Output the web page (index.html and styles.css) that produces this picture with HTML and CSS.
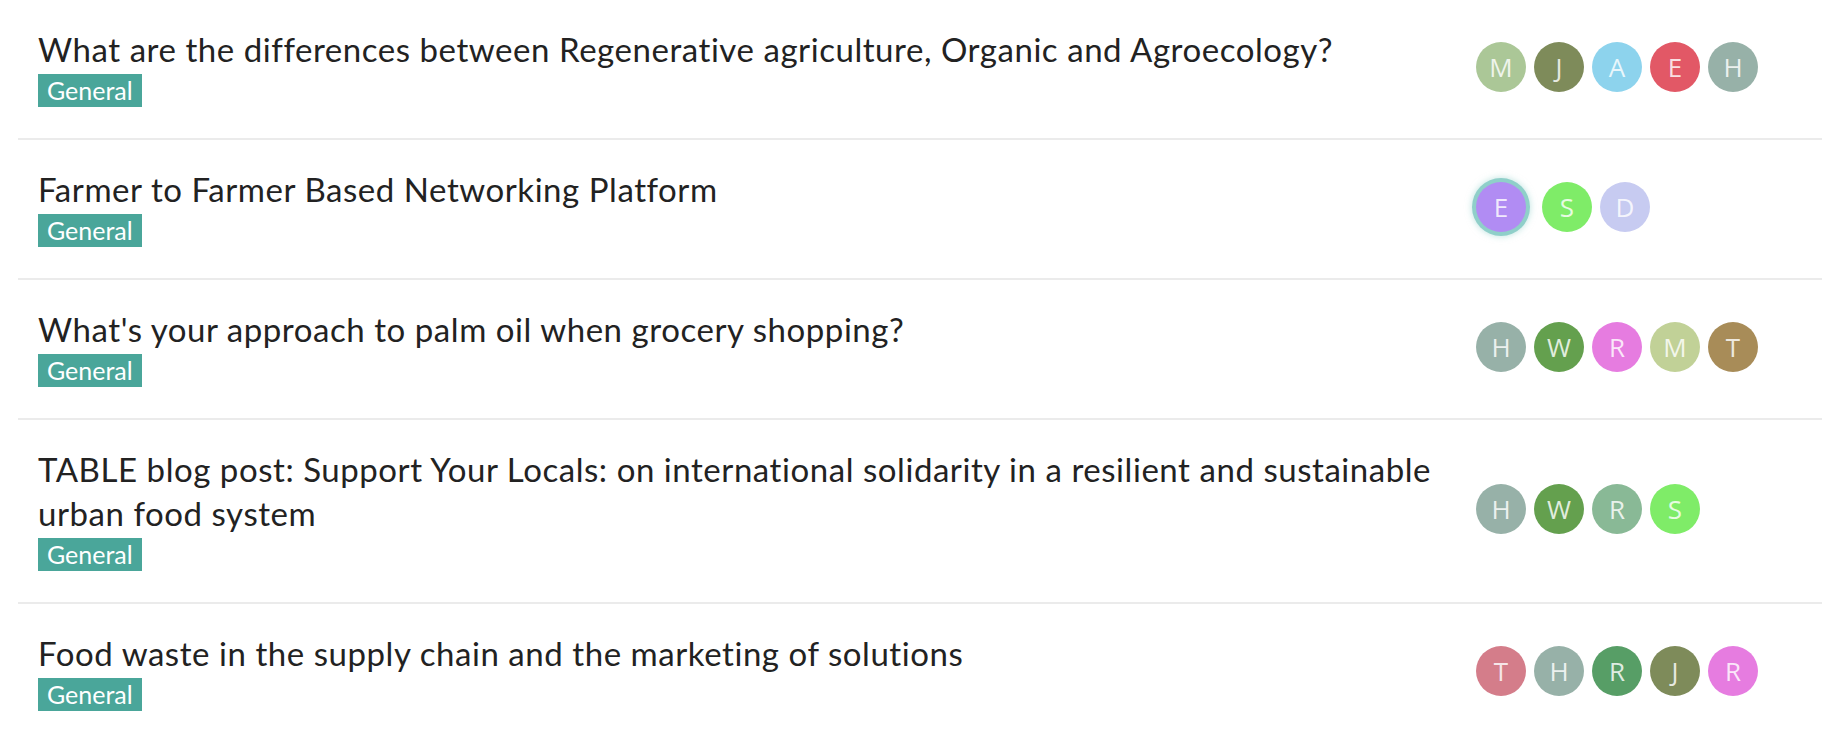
FILE: index.html
```html
<!DOCTYPE html>
<html lang="en">
<head>
<meta charset="utf-8">
<title>Topics</title>
<link rel="stylesheet" href="styles.css">
</head>
<body>
<ul class="topic-list">
  <li class="topic">
    <div class="topic-main">
      <div class="topic-title">What are the differences between Regenerative agriculture, Organic and Agroecology?</div>
      <span class="tag">General</span>
    </div>
    <div class="posters">
      <span class="avatar c-sage">M</span>
      <span class="avatar c-olive">J</span>
      <span class="avatar c-sky">A</span>
      <span class="avatar c-red">E</span>
      <span class="avatar c-grey">H</span>
    </div>
  </li>
  <li class="topic">
    <div class="topic-main">
      <div class="topic-title">Farmer to Farmer Based Networking Platform</div>
      <span class="tag">General</span>
    </div>
    <div class="posters">
      <span class="avatar c-purple latest">E</span>
      <span class="avatar c-lime">S</span>
      <span class="avatar c-lavender">D</span>
    </div>
  </li>
  <li class="topic">
    <div class="topic-main">
      <div class="topic-title">What's your approach to palm oil when grocery shopping?</div>
      <span class="tag">General</span>
    </div>
    <div class="posters">
      <span class="avatar c-grey">H</span>
      <span class="avatar c-green">W</span>
      <span class="avatar c-pink">R</span>
      <span class="avatar c-pale">M</span>
      <span class="avatar c-brown">T</span>
    </div>
  </li>
  <li class="topic">
    <div class="topic-main">
      <div class="topic-title">TABLE blog post: Support Your Locals: on international solidarity in a resilient and sustainable urban food system</div>
      <span class="tag">General</span>
    </div>
    <div class="posters">
      <span class="avatar c-grey">H</span>
      <span class="avatar c-green">W</span>
      <span class="avatar c-mint">R</span>
      <span class="avatar c-lime">S</span>
    </div>
  </li>
  <li class="topic">
    <div class="topic-main">
      <div class="topic-title">Food waste in the supply chain and the marketing of solutions</div>
      <span class="tag">General</span>
    </div>
    <div class="posters">
      <span class="avatar c-rose">T</span>
      <span class="avatar c-grey">H</span>
      <span class="avatar c-forest">R</span>
      <span class="avatar c-olive">J</span>
      <span class="avatar c-pink">R</span>
    </div>
  </li>
</ul>
</body>
</html>
```

FILE: styles.css
```css
html, body {
  margin: 0;
  padding: 0;
  background: #ffffff;
}

body {
  font-family: "Lato", "Noto Sans", sans-serif;
  color: #222222;
  overflow: hidden;
}

.topic-list {
  list-style: none;
  margin: 0 0 0 18px;
  padding: 0;
}

.topic {
  display: flex;
  align-items: center;
  gap: 4px;
  padding: 27px 20px 31px 20px;
  border-bottom: 2px solid #ebebeb;
}

.topic-main {
  flex: 1;
  min-width: 0;
  display: flex;
  flex-direction: column;
  align-items: flex-start;
}

.topic-title {
  font-size: 33px;
  line-height: 44px;
  letter-spacing: 0.55px;
  color: #222222;
}

.tag {
  display: inline-block;
  margin-top: 3px;
  padding: 0 9px;
  height: 33px;
  line-height: 33px;
  background: #4aa69a;
  color: #ffffff;
  font-size: 25px;
}

.posters {
  width: 326px;
  flex-shrink: 0;
  display: flex;
  align-items: center;
  gap: 8px;
}

.avatar {
  width: 50px;
  height: 50px;
  border-radius: 50%;
  display: flex;
  align-items: center;
  justify-content: center;
  font-family: "Open Sans", "Noto Sans", sans-serif;
  font-size: 26px;
  color: rgba(255, 255, 255, 0.82);
}

.avatar.latest {
  margin-right: 8px;
  box-shadow: 0 0 0 4px #8fcfc9, 0 0 7px 4px rgba(143, 207, 201, 0.6);
}

.c-sage { background: #abc797; }
.c-olive { background: #7e8b5a; }
.c-sky { background: #8dd3ed; }
.c-red { background: #e25866; }
.c-grey { background: #97b1a8; }
.c-purple { background: #b18cf3; }
.c-lime { background: #7fec68; }
.c-lavender { background: #c7cbf1; }
.c-green { background: #64a04e; }
.c-pink { background: #e67ce0; }
.c-pale { background: #c1d197; }
.c-brown { background: #a88c58; }
.c-mint { background: #89b996; }
.c-rose { background: #d47d8a; }
.c-forest { background: #579e66; }
```
